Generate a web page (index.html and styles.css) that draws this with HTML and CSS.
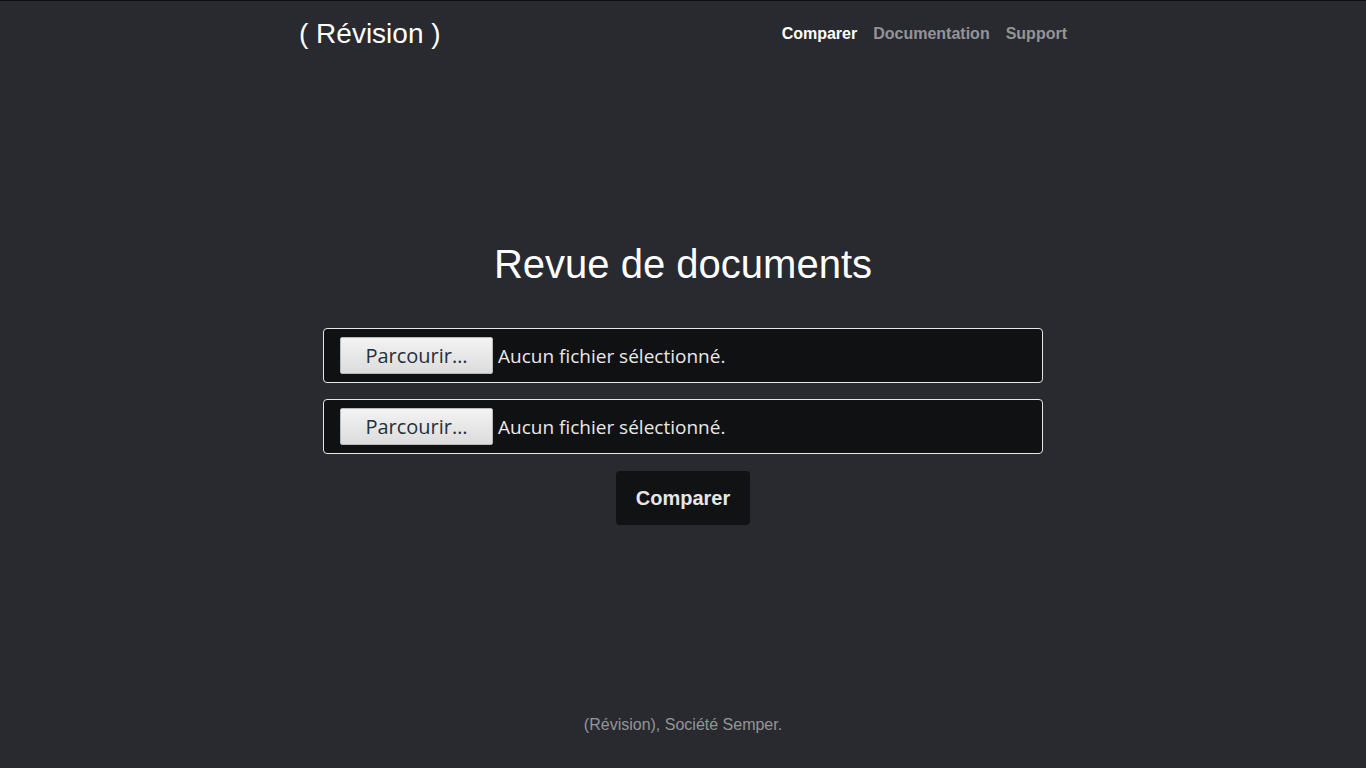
FILE: index.html
```html
<!DOCTYPE html>
<html lang="fr">
<head>
<meta charset="utf-8">
<title>Révision</title>
<link rel="stylesheet" href="styles.css">
</head>
<body>
<div class="cover">
  <header class="masthead">
    <h3 class="brand">( Révision )</h3>
    <nav class="nav">
      <a class="nav-link active" href="#">Comparer</a>
      <a class="nav-link" href="#">Documentation</a>
      <a class="nav-link" href="#">Support</a>
    </nav>
  </header>
  <main class="main">
    <h1 class="title">Revue de documents</h1>
    <form class="form">
      <div class="file-field">
        <span class="file-btn">Parcourir…</span>
        <span class="file-label">Aucun fichier sélectionné.</span>
      </div>
      <div class="file-field">
        <span class="file-btn">Parcourir…</span>
        <span class="file-label">Aucun fichier sélectionné.</span>
      </div>
      <button type="button" class="submit">Comparer</button>
    </form>
  </main>
  <footer class="footer">
    <p>(Révision), Société Semper.</p>
  </footer>
</div>
</body>
</html>
```
FILE: styles.css
```css
html, body {
  height: 100%;
  margin: 0;
}
body {
  background: #282a2f;
  color: #fff;
  font-family: "Liberation Sans", Arial, sans-serif;
  font-size: 16px;
  border-top: 1px solid #0c0d0f;
  box-sizing: border-box;
}
.cover {
  width: 768px;
  margin: 0 auto;
  height: 100%;
  display: flex;
  flex-direction: column;
}
.masthead {
  display: flex;
  justify-content: space-between;
  align-items: center;
  height: 64px;
  margin-top: -1px;
}
.brand {
  margin: 0;
  font-size: 28px;
  font-weight: 400;
  line-height: 1.2;
  margin-top: 3px;
}
.nav {
  display: flex;
  gap: 16px;
  margin-top: 4px;
}
.nav-link {
  color: rgba(255,255,255,0.5);
  font-weight: 700;
  text-decoration: none;
  font-size: 16px;
}
.nav-link.active {
  color: #fff;
}
.main {
  flex: 1;
  display: flex;
  flex-direction: column;
  align-items: center;
  padding-top: 176px;
}
.title {
  margin: 0 0 40px;
  font-size: 40px;
  font-weight: 400;
  line-height: 48px;
}
.form {
  width: 720px;
  display: flex;
  flex-direction: column;
  align-items: center;
  gap: 16px;
}
.file-field {
  width: 100%;
  box-sizing: border-box;
  height: 55px;
  border: 1px solid #e6e6e6;
  border-radius: 4px;
  background: #101113;
  padding: 8px 16px;
  display: flex;
  align-items: center;
  font-family: "Open Sans", "Noto Sans", sans-serif;
  font-size: 19px;
}
.file-btn {
  box-sizing: border-box;
  width: 153px;
  height: 37px;
  display: flex;
  align-items: center;
  justify-content: center;
  background: linear-gradient(#f3f3f3, #dcdcdc);
  border: 1px solid #b9b9b9;
  border-radius: 2px;
  color: #26303a;
  font-size: 20px;
  margin-right: 5px;
}
.file-label {
  color: #e8e8e8;
}
.submit {
  width: 134px;
  height: 54px;
  margin-top: 1px;
  background: #111214;
  border: none;
  border-radius: 4px;
  color: #e6e6e6;
  font-family: "Liberation Sans", Arial, sans-serif;
  font-size: 20px;
  font-weight: 700;
}
.footer {
  text-align: center;
  color: rgba(255,255,255,0.5);
  height: 64px;
}
.footer p {
  margin: 12px 0 0;
}
```
